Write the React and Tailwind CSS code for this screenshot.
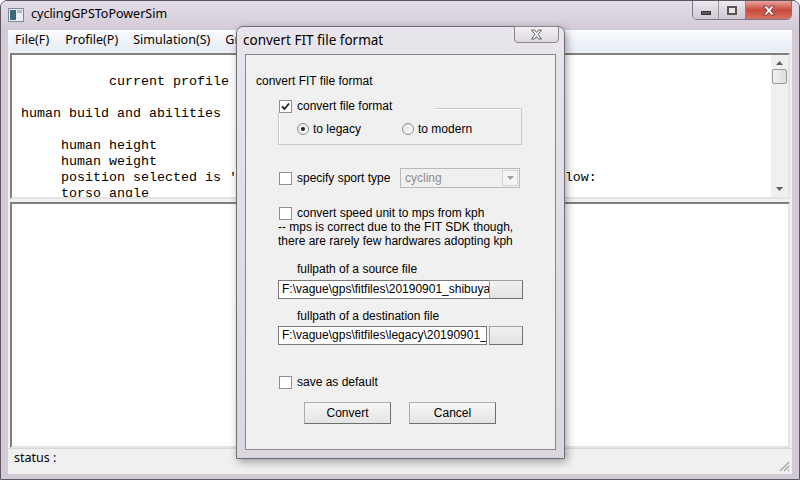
import React from "react";

const ui = { fontFamily: '"Noto Sans", "Open Sans", sans-serif' };
const dlg = { fontFamily: '"Liberation Sans", Arial, sans-serif' };
const mono = { fontFamily: '"Liberation Mono", "Courier New", monospace' };

const CheckBox = ({ checked }) => (
  <span className="w-[13px] h-[13px] border border-[#8e8f8f] bg-white flex items-center justify-center shrink-0">
    {checked && (
      <svg width="9" height="9" viewBox="0 0 9 9">
        <path d="M1 4.5 L3.5 7 L8 1.5" fill="none" stroke="#222" strokeWidth="1.8" />
      </svg>
    )}
  </span>
);

const Radio = ({ checked }) => (
  <span className="w-[12px] h-[12px] rounded-full border border-[#8e8f8f] bg-gradient-to-br from-[#e0e0e0] to-white flex items-center justify-center shrink-0">
    {checked && <span className="w-[4px] h-[4px] rounded-full bg-[#222]" />}
  </span>
);

const lines = [
  "",
  "           current profile",
  "",
  "human build and abilities",
  "",
  "     human height",
  "     human weight",
  "     position selected is 'drop', so angles of body parts are as follow:",
  "     torso angle",
];

const ConvertDialog = () => (
  <div className="absolute left-[235px] top-[25px] w-[329px] h-[433px] rounded-t-[7px] border border-[#6f6a74] bg-gradient-to-b from-[#e9e5ec] to-[#dcd6df] shadow-[2px_3px_8px_rgba(0,0,0,0.35)] flex flex-col">
    {/* title */}
    <div className="h-[27px] flex items-start justify-between pl-[6px] pr-[5px]">
      <span className="mt-[3px] text-[13.5px] text-black" style={ui}>
        convert FIT file format
      </span>
      <span className="w-[45px] h-[17px] -mt-px rounded-b-[4px] border border-[#8b8591] bg-gradient-to-b from-[#f2f0f4] to-[#dcd8e0] flex items-center justify-center">
        <svg width="13" height="11" viewBox="0 0 13 11">
          <path d="M1.5 1 L4.5 1 L6.5 3.5 L8.5 1 L11.5 1 L8 5.5 L11.5 10 L8.5 10 L6.5 7.5 L4.5 10 L1.5 10 L5 5.5 Z" fill="#f4f4f4" stroke="#555" strokeWidth="0.9" />
        </svg>
      </span>
    </div>
    {/* client */}
    <div className="mx-[8px] h-[396px] border border-[#8a8590] bg-[#f0f0f0] text-[12px] text-black" style={dlg}>
      <div className="mt-[19px] ml-[10px] h-[14px] leading-[14px]">convert FIT file format</div>

      <div className="relative ml-[32px] mt-[11px] w-[244px] h-[48px]">
        <div className="absolute left-0 right-0 top-[9px] bottom-[2px] border border-[#c9c9c9] shadow-[inset_1px_1px_0_#fff]" />
        <div className="relative flex items-center h-[14px] w-[157px] bg-[#f0f0f0] pl-px">
          <CheckBox checked />
          <span className="ml-[5px] leading-[14px]">convert file format</span>
        </div>
        <div className="relative flex items-center h-[14px] mt-[9px] pl-[19px]">
          <Radio checked />
          <span className="ml-[4px] leading-[14px]">to legacy</span>
          <span className="ml-[41px]"><Radio /></span>
          <span className="ml-[4px] leading-[14px]">to modern</span>
        </div>
      </div>

      <div className="ml-[33px] mt-[21px] h-[20px] flex items-center">
        <CheckBox />
        <span className="ml-[5px] w-[103px]">specify sport type</span>
        <div className="w-[120px] h-[20px] border border-[#b9b9b9] bg-[#f0f0f0] flex items-center justify-between">
          <span className="ml-[4px] text-[#8c8c8c]">cycling</span>
          <span className="w-[16px] h-[16px] mr-px border border-[#d4d4d4] bg-[#f4f4f4] flex items-center justify-center">
            <svg width="7" height="4" viewBox="0 0 7 4"><path d="M0 0 L7 0 L3.5 4 Z" fill="#a0a0a0" /></svg>
          </span>
        </div>
      </div>

      <div className="ml-[32px] mt-[18px] leading-[14px]">
        <div className="flex items-center pl-px">
          <CheckBox />
          <span className="ml-[5px]">convert speed unit to mps from kph</span>
        </div>
        <div>-- mps is correct due to the FIT SDK though,</div>
        <div>there are rarely few hardwares adopting kph</div>
      </div>

      <div className="ml-[51px] mt-[14px] h-[14px] leading-[14px]">fullpath of a source file</div>
      <div className="ml-[32px] mt-[4px] h-[19px] flex">
        <div className="w-[211px] h-[19px] border border-[#7a7a7a] border-r-0 bg-white overflow-hidden whitespace-nowrap pl-[3px] leading-[17px]">
          F:\vague\gps\fitfiles\20190901_shibuya.fit
        </div>
        <div className="w-[34px] h-[19px] border border-[#a0a0a0] border-r-[#707070] border-b-[#707070] bg-gradient-to-b from-[#f2f2f2] to-[#e2e2e2]" />
      </div>

      <div className="ml-[51px] mt-[10px] h-[14px] leading-[14px]">fullpath of a destination file</div>
      <div className="ml-[32px] mt-[3px] h-[19px] flex">
        <div className="w-[209px] h-[19px] border border-[#7a7a7a] bg-white overflow-hidden whitespace-nowrap pl-[3px] leading-[17px]">
          F:\vague\gps\fitfiles\legacy\20190901_shibuya.fit
        </div>
        <div className="ml-[2px] w-[34px] h-[19px] border border-[#a0a0a0] border-r-[#707070] border-b-[#707070] bg-gradient-to-b from-[#f2f2f2] to-[#e2e2e2]" />
      </div>

      <div className="ml-[33px] mt-[30px] h-[14px] flex items-center">
        <CheckBox />
        <span className="ml-[5px]">save as default</span>
      </div>

      <div className="ml-[58px] mt-[13px] flex gap-[18px]">
        {["Convert", "Cancel"].map((b) => (
          <div
            key={b}
            className="w-[87px] h-[22px] border border-[#acacac] border-r-[#6e6e6e] border-b-[#6e6e6e] bg-gradient-to-b from-[#f6f6f6] to-[#e4e4e4] flex items-center justify-center text-[12px]"
          >
            {b}
          </div>
        ))}
      </div>
    </div>
  </div>
);

export default function App() {
  return (
    <div className="relative w-[800px] h-[480px] overflow-hidden bg-[#d3cad6] rounded-t-[7px] border border-[#5c5662] flex flex-col">
      {/* title bar */}
      <div className="h-[29px] flex items-start bg-gradient-to-b from-[#e4dde7] to-[#d3cad6] shrink-0">
        <svg className="ml-[7px] mt-[7px]" width="16" height="14" viewBox="0 0 16 14">
          <rect x="0.5" y="0.5" width="15" height="13" fill="#e8eef2" stroke="#7a8a96" />
          <rect x="2" y="2" width="6" height="10" fill="#3a6a7a" />
          <rect x="9" y="2" width="5" height="3" fill="#b0bcc4" />
        </svg>
        <span className="ml-[7px] mt-[4px] text-[12.5px] text-black" style={ui}>
          cyclingGPSToPowerSim
        </span>
        <div className="ml-auto mr-[7px] -mt-px flex h-[20px] rounded-b-[5px] overflow-hidden border border-[#7d7682]">
          <span className="w-[26px] bg-gradient-to-b from-[#ece8ee] to-[#cfc8d3] border-r border-[#9c95a1] flex items-center justify-center">
            <span className="w-[10px] h-[4px] mt-[5px] bg-[#5a5a5a] border border-[#333]" />
          </span>
          <span className="w-[27px] bg-gradient-to-b from-[#ece8ee] to-[#cfc8d3] border-r border-[#8a838f] flex items-center justify-center">
            <span className="w-[10px] h-[9px] border-[2px] border-[#555] bg-[#e8e8e8]" />
          </span>
          <span className="w-[45px] bg-gradient-to-b from-[#e6a49a] via-[#c9483d] to-[#d6735f] flex items-center justify-center">
            <svg width="14" height="11" viewBox="0 0 14 11">
              <path d="M1.5 1 L4.8 1 L7 3.6 L9.2 1 L12.5 1 L8.8 5.5 L12.5 10 L9.2 10 L7 7.4 L4.8 10 L1.5 10 L5.2 5.5 Z" fill="#fff" stroke="#6a2a24" strokeWidth="0.8" />
            </svg>
          </span>
        </div>
      </div>

      {/* menu bar */}
      <div className="mx-[7px] h-[21px] bg-gradient-to-b from-[#fafbfd] to-[#e6ebf5] flex items-center text-[12.5px] text-black shrink-0" style={ui}>
        <span className="ml-[7px]">File(F)</span>
        <span className="ml-[16px]">Profile(P)</span>
        <span className="ml-[15px]">Simulation(S)</span>
        <span className="ml-[15px]">Graph(G)</span>
      </div>

      {/* client */}
      <div className="mx-[7px] flex-1 bg-[#f0f0f0] flex flex-col">
        <div className="mx-[2px] mt-[2px] h-[146px] border-2 border-[#7f7f7f] border-r-[#e4e4e4] border-b-[#e4e4e4] bg-white flex">
          <pre className="flex-1 pl-[9px] pt-[3px] text-[13.33px] leading-[16px] text-black overflow-hidden" style={mono}>
            {lines.join("\n")}
          </pre>
          <div className="w-[17px] bg-[#f0f0f0] flex flex-col items-center">
            <svg className="mt-[6px]" width="7" height="4" viewBox="0 0 7 4"><path d="M0 4 L7 4 L3.5 0 Z" fill="#606060" /></svg>
            <span className="mt-[4px] w-[15px] h-[15px] rounded-[2px] border border-[#9a9a9a] bg-gradient-to-r from-[#f2f2f2] to-[#dcdcdc]" />
            <svg className="mt-auto mb-[6px]" width="7" height="4" viewBox="0 0 7 4"><path d="M0 0 L7 0 L3.5 4 Z" fill="#606060" /></svg>
          </div>
        </div>
        <div className="mx-[2px] mt-[3px] h-[246px] border-2 border-[#7f7f7f] border-r-[#e4e4e4] border-b-[#e4e4e4] bg-white" />
        <div className="flex-1 border-t border-[#d8d8d8] flex items-end justify-between">
          <span className="ml-[6px] mb-[6px] text-[12.5px] text-black" style={ui}>status :</span>
          <svg className="mr-[2px] mb-[2px]" width="12" height="12" viewBox="0 0 12 12">
            <path d="M11 2 L2 11 M11 6 L6 11 M11 10 L10 11" stroke="#a0a0a0" strokeWidth="1.2" />
          </svg>
        </div>
      </div>
      <div className="h-[7px] shrink-0" />

      <ConvertDialog />
    </div>
  );
}
